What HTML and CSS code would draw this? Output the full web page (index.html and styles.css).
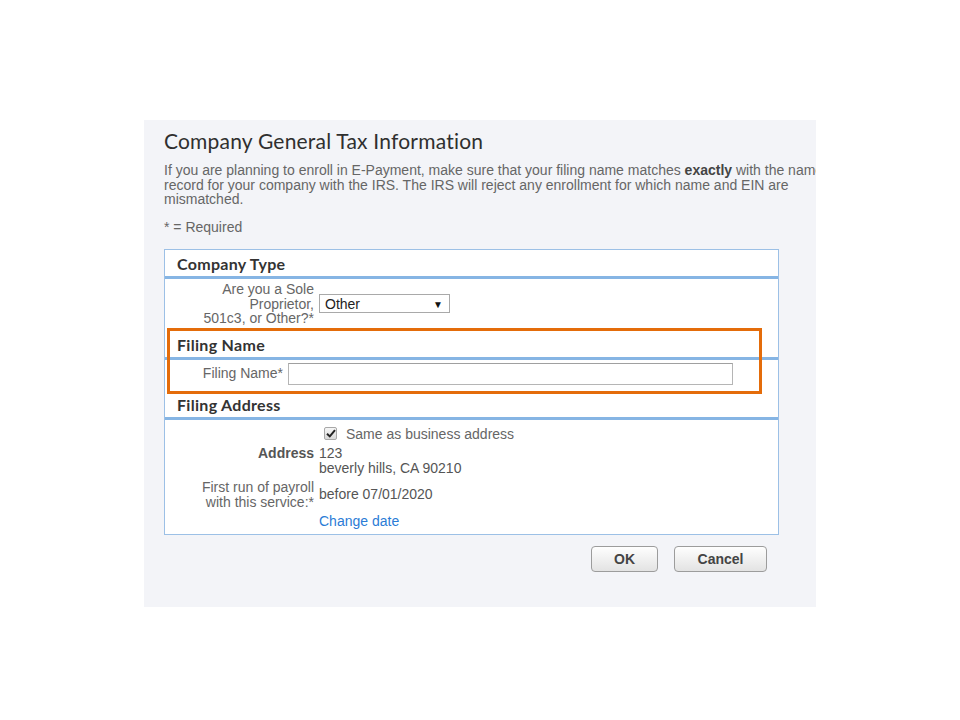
FILE: index.html
```html
<!DOCTYPE html>
<html lang="en">
<head>
    <meta charset="UTF-8">
    <title>Company General Tax Information</title>
    <link rel="stylesheet" href="styles.css">
</head>
<body>
    <div class="panel">
        <h1 class="title">Company General Tax Information</h1>
        <p class="intro">If you are planning to enroll in E-Payment, make sure that your filing name matches <b>exactly</b> with the name<br>record for your company with the IRS. The IRS will reject any enrollment for which name and EIN are<br>mismatched.</p>
        <p class="required">* = Required</p>

        <div class="form-box">
            <div class="section-head">Company Type</div>
            <table class="rows rows-type">
                <tr>
                    <td class="label">Are you a Sole Proprietor,<br>501c3, or Other?*</td>
                    <td>
                        <span class="select-wrap">
                            <select class="select">
                                <option>Other</option>
                            </select>
                        </span>
                    </td>
                </tr>
            </table>

            <div class="section-head">Filing Name</div>
            <table class="rows rows-name">
                <tr>
                    <td class="label">Filing Name*</td>
                    <td><input type="text" class="text-input"></td>
                </tr>
            </table>

            <div class="section-head">Filing Address</div>
            <table class="rows rows-address">
                <tr>
                    <td class="label"></td>
                    <td class="check-cell">
                        <span class="checkbox">
                            <svg width="10" height="9" viewBox="0 0 10 9"><path d="M1 4.8 L3.8 7.4 L9 1.2" fill="none" stroke="#222" stroke-width="2"/></svg>
                        </span>
                        Same as business address
                    </td>
                </tr>
                <tr>
                    <td class="label label-strong top">Address</td>
                    <td class="value">123<br>beverly hills, CA 90210</td>
                </tr>
                <tr>
                    <td class="label">First run of payroll with this service:*</td>
                    <td class="value">before 07/01/2020</td>
                </tr>
                <tr>
                    <td class="label"></td>
                    <td class="value"><a href="#" class="link">Change date</a></td>
                </tr>
            </table>
        </div>

        <div class="actions">
            <button class="btn btn-ok">OK</button>
            <button class="btn btn-cancel">Cancel</button>
        </div>

        <div class="highlight"></div>
    </div>
</body>
</html>
```

FILE: styles.css
```css
body {
    margin: 0;
    background: #ffffff;
    font-family: "Liberation Sans", Arial, sans-serif;
}
.panel {
    position: relative;
    width: 672px;
    height: 487px;
    margin: 120px 0 0 144px;
    padding: 9px 0 0 20px;
    box-sizing: border-box;
    background: #f3f4f8;
    overflow: hidden;
}
.title {
    margin: 0;
    font-family: Lato, "Open Sans", sans-serif;
    font-weight: normal;
    font-size: 21px;
    line-height: 24px;
    color: #2f2f2f;
    letter-spacing: 0.2px;
}
.intro {
    margin: 10px 0 0 0;
    font-size: 14px;
    line-height: 14.5px;
    color: #666;
    white-space: nowrap;
}
.intro b {
    color: #444;
}
.required {
    margin: 13px 0 0 0;
    font-size: 14px;
    line-height: 14.5px;
    color: #666;
}
.form-box {
    width: 615px;
    margin-top: 15px;
    box-sizing: border-box;
    border: 1px solid #9cc0e6;
    background: #ffffff;
}
.section-head {
    height: 26px;
    padding-left: 12px;
    font-family: Lato, "Open Sans", sans-serif;
    font-weight: bold;
    font-size: 16px;
    letter-spacing: 0.3px;
    line-height: 28px;
    color: #333;
    border-bottom: 3px solid #86b5e4;
}
.rows {
    border-collapse: collapse;
    font-size: 14px;
    line-height: 14.5px;
    color: #666;
}
.rows td {
    padding: 0;
}
.label {
    text-align: right;
    padding-right: 5px !important;
}
.rows-type {
    margin: 3px 0 5px 0;
}
.rows-type .label,
.rows-address .label {
    width: 116px;
    padding-left: 33px !important;
}
.rows-name {
    margin: 3px 0 6px 0;
}
.rows-name .label {
    width: 118px;
}
.rows-address {
    margin: 7px 0 0 0;
}
.rows-address td {
    padding-bottom: 5px;
}
.label-strong {
    font-weight: bold;
    color: #555;
}
.top {
    vertical-align: top;
}
.value {
    color: #555;
}
.check-cell {
    display: flex;
    align-items: center;
    gap: 9px;
    height: 14.5px;
    padding-left: 5px !important;
    color: #666;
}
.checkbox {
    display: inline-flex;
    align-items: center;
    justify-content: center;
    width: 11px;
    height: 11px;
    border: 1px solid #a8a8a8;
    border-radius: 2px;
    background: linear-gradient(#f6f6f6, #d8d8d8);
}
.link {
    color: #2b7cd6;
    text-decoration: none;
}
.select-wrap {
    position: relative;
    display: inline-block;
}
.select-wrap::after {
    content: "\25BC";
    position: absolute;
    right: 7px;
    top: 4px;
    font-size: 10px;
    color: #111;
    pointer-events: none;
}
.select {
    appearance: none;
    width: 131px;
    height: 19px;
    padding: 0 0 0 5px;
    border: 1px solid #a9a9a9;
    border-radius: 0;
    background: #fff;
    font-family: "Liberation Sans", Arial, sans-serif;
    font-size: 14px;
    color: #222;
}
.text-input {
    display: block;
    width: 445px;
    height: 22px;
    box-sizing: border-box;
    border: 1px solid #b5b5b5;
    border-top-color: #a0a0a0;
    background: #fff;
}
.actions {
    display: flex;
    justify-content: flex-end;
    gap: 16px;
    width: 615px;
    padding-right: 12px;
    margin-top: 11px;
    box-sizing: border-box;
}
.btn {
    height: 26px;
    border: 1px solid #9c9c9c;
    border-radius: 4px;
    background: linear-gradient(#fefefe, #e3e3e3);
    font-family: "Liberation Sans", Arial, sans-serif;
    font-weight: bold;
    font-size: 14px;
    color: #444;
    cursor: pointer;
}
.btn-ok {
    width: 67px;
}
.btn-cancel {
    width: 93px;
}
.highlight {
    position: absolute;
    left: 23px;
    top: 208px;
    width: 595px;
    height: 66px;
    box-sizing: border-box;
    border: 3px solid #e46c0a;
}
```
